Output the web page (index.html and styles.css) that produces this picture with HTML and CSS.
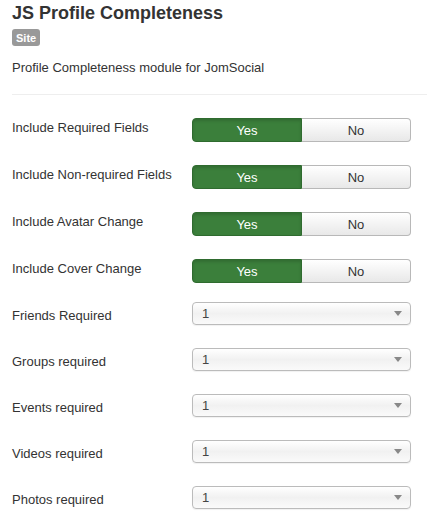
FILE: index.html
```html
<!DOCTYPE html>
<html>
<head>
<meta charset="utf-8">
<link rel="stylesheet" href="styles.css">
</head>
<body>
<div class="page">
  <h1 class="title">JS Profile Completeness</h1>
  <span class="badge">Site</span>
  <p class="desc">Profile Completeness module for JomSocial</p>
  <hr class="rule">
  <div class="form">
    <div class="row toggle-row">
      <label class="label">Include Required Fields</label>
      <div class="toggle"><span class="yes">Yes</span><span class="no">No</span></div>
    </div>
    <div class="row toggle-row">
      <label class="label">Include Non-required Fields</label>
      <div class="toggle"><span class="yes">Yes</span><span class="no">No</span></div>
    </div>
    <div class="row toggle-row">
      <label class="label">Include Avatar Change</label>
      <div class="toggle"><span class="yes">Yes</span><span class="no">No</span></div>
    </div>
    <div class="row toggle-row last-toggle">
      <label class="label">Include Cover Change</label>
      <div class="toggle"><span class="yes">Yes</span><span class="no">No</span></div>
    </div>
    <div class="row select-row">
      <label class="label">Friends Required</label>
      <div class="select"><span class="val">1</span><span class="arrow"></span></div>
    </div>
    <div class="row select-row">
      <label class="label">Groups required</label>
      <div class="select"><span class="val">1</span><span class="arrow"></span></div>
    </div>
    <div class="row select-row">
      <label class="label">Events required</label>
      <div class="select"><span class="val">1</span><span class="arrow"></span></div>
    </div>
    <div class="row select-row">
      <label class="label">Videos required</label>
      <div class="select"><span class="val">1</span><span class="arrow"></span></div>
    </div>
    <div class="row select-row">
      <label class="label">Photos required</label>
      <div class="select"><span class="val">1</span><span class="arrow"></span></div>
    </div>
  </div>
</div>
</body>
</html>
```
FILE: styles.css
```css
html, body {
  margin: 0;
  padding: 0;
  background: #fff;
}
body {
  font-family: "Liberation Sans", Arial, sans-serif;
  color: #333;
  font-size: 13px;
}
.page {
  padding: 0 0 0 12px;
  width: 415px;
  overflow: hidden;
}
.title {
  margin: 0;
  padding-top: 2px;
  font-size: 18px;
  line-height: 22px;
  font-weight: bold;
  color: #333;
}
.badge {
  display: inline-block;
  margin-top: 5px;
  background: #999;
  color: #fff;
  font-size: 11px;
  font-weight: bold;
  line-height: 14px;
  padding: 2px 4px 1px;
  border-radius: 3px;
}
.desc {
  margin: 13px 0 0;
  font-size: 13px;
  line-height: 18px;
}
.rule {
  margin: 17px 0 0;
  border: 0;
  border-top: 1px solid #eee;
  height: 0;
}
.form {
  padding-top: 23px;
}
.row {
  display: flex;
  align-items: center;
}
.label {
  width: 180px;
  flex: none;
  line-height: 18px;
}
.toggle-row {
  height: 24px;
  margin-bottom: 23px;
}
.toggle-row .label {
  margin-top: -4px;
}
.last-toggle {
  margin-bottom: 19px;
}
.select-row {
  height: 23px;
  margin-bottom: 23px;
}
.select-row .label {
  margin-top: 4px;
}
.toggle {
  display: flex;
  width: 219px;
  height: 24px;
  box-sizing: border-box;
}
.toggle span {
  flex: 1;
  display: flex;
  align-items: center;
  justify-content: center;
  font-size: 13px;
}
.yes {
  background: #3b7f3b;
  color: #fff;
  border: 1px solid #2f6b2f;
  border-radius: 4px 0 0 4px;
  width: 110px;
  flex: none !important;
  box-sizing: border-box;
  box-shadow: inset 0 2px 3px rgba(0,0,0,0.15);
}
.no {
  background: linear-gradient(#ffffff, #e8e8e8);
  color: #333;
  border: 1px solid #b8b8b8;
  border-left: 0;
  border-radius: 0 4px 4px 0;
  box-sizing: border-box;
}
.select {
  position: relative;
  width: 219px;
  height: 23px;
  box-sizing: border-box;
  border: 1px solid #bbb;
  border-radius: 4px;
  background: linear-gradient(#ffffff 0%, #f1f1f1 50%, #fafafa 100%);
  box-shadow: 0 1px 1px rgba(0,0,0,0.06);
  display: flex;
  align-items: center;
  padding-left: 9px;
}
.val {
  font-size: 13px;
  color: #444;
  flex: 1;
}
.arrow {
  width: 0;
  height: 0;
  border-left: 4px solid transparent;
  border-right: 4px solid transparent;
  border-top: 5px solid #888;
  margin-right: 8px;
}
```
